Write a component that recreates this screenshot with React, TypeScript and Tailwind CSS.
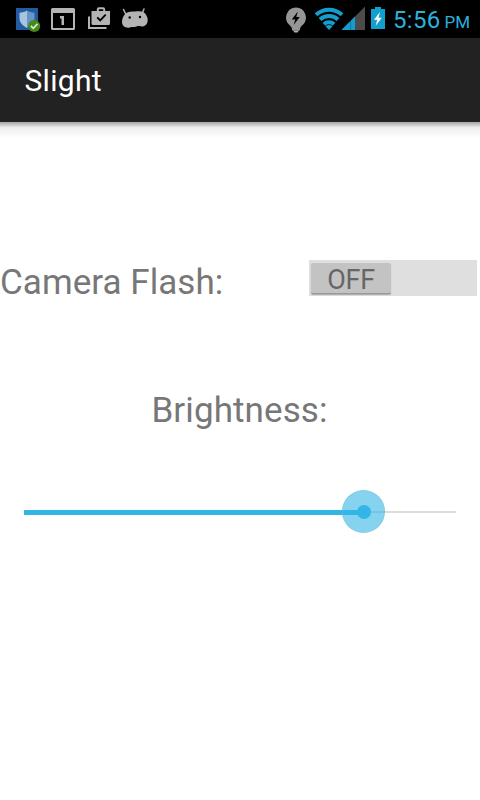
import type { ReactNode } from 'react';

function StatusIcon({ box, className, children }: { box: string; className: string; children: ReactNode }) {
  return (
    <svg viewBox={box} className={`shrink-0 ${className}`} aria-hidden="true">
      {children}
    </svg>
  );
}

function StatusBar() {
  return (
    <header className="flex h-[38px] bg-black">
      <StatusIcon box="0 0 160 38" className="h-[38px] w-[160px]">
        <rect x="16" y="8" width="22" height="22" fill="#235c9e" />
        <path d="M27 10.500c-2.200 1.600-4.600 2-7.500 2.200v5.500c0 4.300 3 7.300 7.500 9.800z" fill="#a9c4dc" />
        <path d="M27 10.500c2.200 1.600 4.600 2 7.500 2.200v5.500c0 4.300-3 7.300-7.500 9.800z" fill="#6596c6" />
        <circle cx="34.200" cy="26" r="6" fill="#438b16" />
        <path d="M30.800 25.900l2.500 2.500 4.200-4.500" fill="none" stroke="#dce8d2" strokeWidth="1.700" />

        <path fillRule="evenodd" d="M52.500 8h21a1.500 1.500 0 0 1 1.500 1.500v19a1.500 1.500 0 0 1-1.500 1.500h-21a1.500 1.500 0 0 1-1.500-1.500v-19a1.500 1.500 0 0 1 1.500-1.500zM53 13v15h20V13z" fill="#b4b4b4" />
        <path d="M60 16h4v9h-2.500v-6.500H60z" fill="#b4b4b4" />

        <path d="M89 16.500v11.500h17.500" fill="none" stroke="#b4b4b4" strokeWidth="2" />
        <path d="M97.800 12V9.300q0-1.100 1.100-1.100h4.200q1.100 0 1.100 1.100V12" fill="none" stroke="#b4b4b4" strokeWidth="2" />
        <path d="M91.500 11h18.500v12.500a1.500 1.500 0 0 1-1.500 1.500h-15.500a1.500 1.500 0 0 1-1.500-1.500z" fill="#b4b4b4" />
        <path d="M97.200 17.300l3 3 5.500-5.600" fill="none" stroke="#000" strokeWidth="1.900" />

        <path d="M123.500 9.500l2.500 5M144 9l-2 5" fill="none" stroke="#b4b4b4" strokeWidth="1.500" strokeLinecap="round" />
        <path d="M126 13.300c2.500-1.900 5-1.500 8.500-1.700s6-.8 8.700.4c2.900 1.700 4.700 5.200 4.500 8.500-.2 3.500-2.500 6-5.700 6-2.500 0-3.500-.9-5.500-.1-2.500 1-4 .1-6 .9-4.300 1.600-8.500-.8-8.500-5.200 0-3.200 1.300-6.600 4-8.800z" fill="#b4b4b4" />
        <circle cx="129.700" cy="17.500" r="1.200" fill="#000" />
        <circle cx="140" cy="17" r="1.200" fill="#000" />
      </StatusIcon>

      <StatusIcon box="275 0 115 38" className="ml-[115px] h-[38px] w-[115px]">
        <path d="M296 7.500a10 10 0 0 0-6.300 17.700c1.600 1.300 2.300 2.300 2.500 5.300h7.600c.2-3 .9-4 2.500-5.300A10 10 0 0 0 296 7.500z" fill="#969696" />
        <path d="M293 30.500h6l-1.500 2h-3z" fill="#b0b0b0" />
        <path d="M297.800 11.500l-6 8h3.500l-1.700 5.400 6.200-7.900h-3.500z" fill="#000" />

        <g fill="none" stroke="#139fce" strokeWidth="4">
          <path d="M316 14.800a19 19 0 0 1 26 0" />
          <path d="M320 19.500a13.200 13.200 0 0 1 18 0" />
          <path d="M324 24.200a7.400 7.400 0 0 1 10 0" />
        </g>
        <path d="M329 30l-3.500-3.800q3.500-2.400 7 0z" fill="#139fce" />

        <path d="M365 6.500V30h-23.500z" fill="#4b4b4b" />
        <path d="M355 16.500V30h-13.500z" fill="#139fce" />
        <path d="M350.700 21v9" stroke="#075974" strokeWidth="0.600" />

        <path d="M375 7h6v2h4v20h-14V9h4z" fill="#139fce" />
        <path d="M380 12l-6 7.800h3.200l-1.500 6 6.100-8h-3.300z" fill="#fff" />
      </StatusIcon>

      <time className="ml-[3px] flex items-baseline whitespace-nowrap text-[#2cb0de]">
        <span className="text-[24px] leading-[41px] tracking-[0.300px]">5:56</span>
        <span className="ml-[4px] text-[17px]">PM</span>
      </time>
    </header>
  );
}

function FlashSwitch() {
  return (
    <button type="button" role="switch" aria-checked="false" aria-label="Camera Flash" className="mr-[3px] flex h-[36px] w-[168px] bg-[#dfdfdf] pt-[3px] pl-[2px]">
      <span className="flex h-[31px] w-[80px] justify-center rounded-[2px] border-b border-[#999] bg-[#c3c3c3] text-[27px] leading-[34px] tracking-[-0.300px] text-[#666] shadow-[0_1px_1px_#aaa]">
        OFF
      </span>
    </button>
  );
}

function BrightnessSlider() {
  return (
    <div role="slider" aria-label="Brightness" aria-valuemin={0} aria-valuemax={255} aria-valuenow={201} className="relative mx-6 mt-[58px] flex h-[44px] items-center">
      <div className="h-[5px] w-[340px] bg-[#33b5e5]" />
      <div className="h-[2px] grow bg-[#dcdcdc]" />
      <div className="absolute top-0 left-[318px] flex size-[43px] items-center justify-center rounded-full border border-[#83bfd5]/40 bg-[#33b5e5]/60">
        <div className="size-[14px] rounded-full bg-[#33b5e5]" />
      </div>
    </div>
  );
}

export default function App() {
  return (
    <div className="h-[800px] w-[480px] overflow-hidden bg-white font-[Roboto,'Noto_Sans',sans-serif]">
      <StatusBar />
      <div className="h-[84px] bg-[#222] pr-6 pl-[24.500px] text-[30px] leading-[85px] tracking-[0.300px] text-white">
        <h1>Slight</h1>
      </div>
      <div className="h-[16px] bg-linear-to-b from-[#a5a5a5] via-[#ededed] via-35% to-white" />
      <main>
        <div className="mt-[122px] flex h-[36px] items-center justify-between">
          <span className="mt-[10px] text-[35px] leading-[42px] tracking-[0.050px] text-[#777]">Camera Flash:</span>
          <FlashSwitch />
        </div>
        <p className="mt-[94px] pr-px text-center text-[35px] leading-[42px] tracking-[0.100px] text-[#777]">Brightness:</p>
        <BrightnessSlider />
      </main>
    </div>
  );
}
